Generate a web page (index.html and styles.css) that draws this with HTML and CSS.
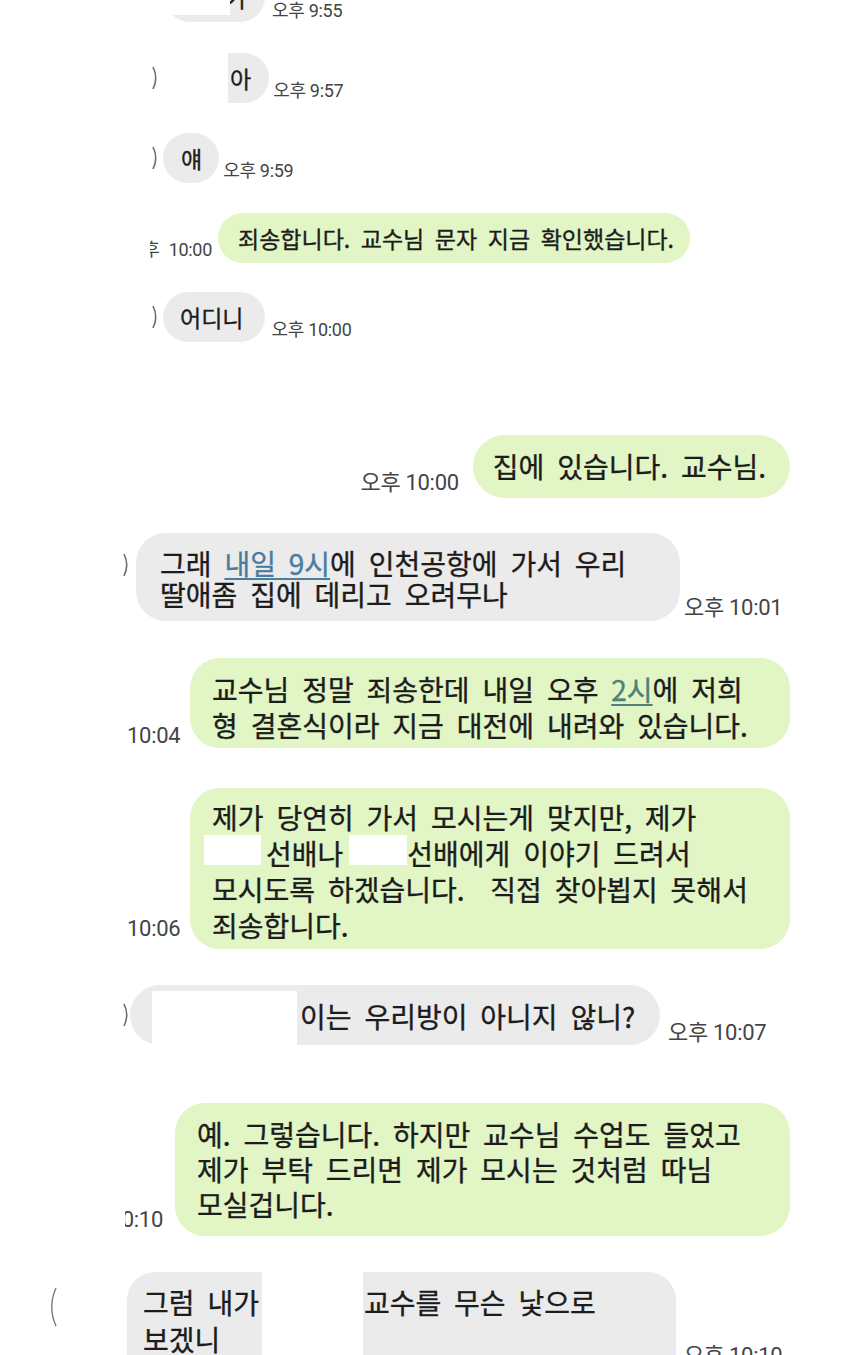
FILE: index.html
```html
<!DOCTYPE html>
<html lang="ko">
<head>
<meta charset="utf-8">
<title>chat</title>
<link rel="stylesheet" href="styles.css">
</head>
<body>
<div class="chat">

  <div class="row r1">
    <div class="bubble gray sm b1"><span class="redact rd1"></span>가</div>
    <span class="time t1">오후 9:55</span>
  </div>

  <div class="row r2">
    <svg class="mk mk2" width="6" height="24" viewBox="0 0 6 24"><path d="M1 1 Q6.5 12 1 23" fill="none" stroke="#6d6d6d" stroke-width="1.6"/></svg>
    <div class="bubble gray sm b2"><span class="redact rd2"></span>아</div>
    <span class="time t2">오후 9:57</span>
  </div>

  <div class="row r3">
    <svg class="mk mk3" width="6" height="24" viewBox="0 0 6 24"><path d="M1 1 Q6.5 12 1 23" fill="none" stroke="#6d6d6d" stroke-width="1.6"/></svg>
    <div class="bubble gray sm b3">얘</div>
    <span class="time t3">오후 9:59</span>
  </div>

  <div class="row r4">
    <span class="time clip t4"><span>오후 10:00</span></span>
    <div class="bubble green sm b4">죄송합니다. 교수님 문자 지금 확인했습니다.</div>
  </div>

  <div class="row r5">
    <svg class="mk mk3" width="6" height="24" viewBox="0 0 6 24"><path d="M1 1 Q6.5 12 1 23" fill="none" stroke="#6d6d6d" stroke-width="1.6"/></svg>
    <div class="bubble gray sm b5">어디니</div>
    <span class="time t5">오후 10:00</span>
  </div>

  <div class="row r6">
    <span class="time big t6">오후 10:00</span>
    <div class="bubble green b6">집에 있습니다. 교수님.</div>
  </div>

  <div class="row r7">
    <svg class="mk mk7" width="6" height="24" viewBox="0 0 6 24"><path d="M1 1 Q6.5 12 1 23" fill="none" stroke="#6d6d6d" stroke-width="1.6"/></svg>
    <div class="bubble gray lg b7">그래 <span class="link l1">내일 9시</span>에 인천공항에 가서 우리<br>딸애좀 집에 데리고 오려무나</div>
    <span class="time big t7">오후 10:01</span>
  </div>

  <div class="row r8">
    <span class="time big t8">10:04</span>
    <div class="bubble green lg b8">교수님 정말 죄송한데 내일 오후 <span class="link l2">2시</span>에 저희<br>형 결혼식이라 지금 대전에 내려와 있습니다.</div>
  </div>

  <div class="row r9">
    <span class="time big t9">10:06</span>
    <div class="bubble green lg b9">제가 당연히 가서 모시는게 맞지만, 제가<br><span class="hide h1"></span>선배나<span class="hide h2"></span>선배에게 이야기 드려서<br>모시도록 하겠습니다.&nbsp; 직접 찾아뵙지 못해서<br>죄송합니다.</div>
  </div>

  <div class="row r10">
    <svg class="mk mk10" width="6" height="24" viewBox="0 0 6 24"><path d="M1 1 Q6.5 12 1 23" fill="none" stroke="#6d6d6d" stroke-width="1.6"/></svg>
    <div class="bubble gray lg b10"><span class="redact rd10"></span>이는 우리방이 아니지 않니?</div>
    <span class="time big t10">오후 10:07</span>
  </div>

  <div class="row r11">
    <span class="time big clip t11"><span>10:10</span></span>
    <div class="bubble green lg b11">예. 그렇습니다. 하지만 교수님 수업도 들었고<br>제가 부탁 드리면 제가 모시는 것처럼 따님<br>모실겁니다.</div>
  </div>

  <div class="row r12">
    <svg class="mk mk12" width="10" height="40" viewBox="0 0 10 40"><path d="M9 1 Q0.5 20 9 39" fill="none" stroke="#7a7a7a" stroke-width="1.4"/></svg>
    <div class="bubble gray lg b12"><span class="redact rd12"></span>그럼 내가<span class="gap12"></span>교수를 무슨 낯으로<br>보겠니</div>
    <span class="time big t12">오후 10:10</span>
  </div>

</div>
</body>
</html>
```

FILE: styles.css
```css
html, body {
  margin: 0;
  padding: 0;
  background: #ffffff;
}
body {
  width: 850px;
  height: 1355px;
  overflow: hidden;
}
.chat {
  display: flex;
  flex-direction: column;
  font-family: "Noto Sans CJK KR", "Noto Sans", sans-serif;
  font-weight: 400;
  color: #1c1c1c;
  -webkit-text-stroke: 0.35px #1c1c1c;
}
.row {
  display: flex;
  align-items: flex-end;
}
.bubble {
  position: relative;
  box-sizing: border-box;
  border-radius: 26px;
  word-spacing: 0.18em;
  white-space: nowrap;
}
.gray { background: #ebebeb; }
.green { background: #e1f5c5; }
.sm {
  height: 50px;
  display: flex;
  align-items: center;
  font-size: 23px;
  padding: 0 20px;
}
.lg {
  font-size: 28px;
}
.time {
  font-family: Roboto, "Noto Sans CJK KR", sans-serif;
  font-weight: 400;
  font-size: 18px;
  line-height: 20px;
  color: #444444;
  -webkit-text-stroke: 0;
  white-space: nowrap;
  letter-spacing: -0.3px;
}
.time.big {
  font-size: 22px;
  line-height: 24px;
}
.clip {
  display: flex;
  justify-content: flex-end;
  overflow: hidden;
}
.clip span { flex: none; }
.mk { flex: none; align-self: center; }
.redact {
  position: absolute;
  background: #ffffff;
}
.link {
  text-decoration: underline;
  text-decoration-thickness: 1.5px;
  text-underline-offset: 3px;
}
.l1 { color: #4a7ca0; -webkit-text-stroke-color: #4a7ca0; }
.l2 { color: #4f7f78; -webkit-text-stroke-color: #4f7f78; }

/* row 1 */
.r1 { margin-top: -28px; padding-left: 165px; }
.b1 { width: 100px; padding: 0 18px 0 0; justify-content: flex-end; }
.rd1 { left: 0; top: 0; width: 65px; height: 43px; }
.t1 { margin: 0 0 1px 7px; }

/* row 2 */
.r2 { margin-top: 31px; padding-left: 152px; }
.mk2 { margin-right: 7px; }
.b2 { padding: 0 18px 0 65px; }
.rd2 { left: 0; top: 0; bottom: 0; width: 63px; }
.t2 { margin: 0 0 2px 4px; }

/* row 3 */
.r3 { margin-top: 30px; padding-left: 152px; }
.mk3 { margin-right: 5px; }
.b3 { padding: 0 17px 0 18px; }
.t3 { margin: 0 0 2px 4px; }

/* row 4 */
.r4 { margin-top: 30px; padding-left: 150px; }
.t4 { width: 62px; margin: 0 6px 3px 0; word-spacing: 5px; }
.b4 { padding: 0 16px 0 20px; }

/* row 5 */
.r5 { margin-top: 29px; padding-left: 152px; }
.b5 { padding: 0 22px 0 17px; }
.t5 { margin: 0 0 2px 6px; }

/* row 6 */
.r6 { margin-top: 93px; justify-content: flex-end; padding-right: 60px; }
.t6 { margin: 0 14px 3px 0; }
.b6 {
  font-size: 28px;
  line-height: 35px;
  padding: 14px 24px 14px 20px;
  border-radius: 32px;
}

/* row 7 */
.r7 { margin-top: 35px; padding-left: 123px; }
.mk7 { margin-right: 7px; align-self: flex-start; margin-top: 20px; }
.b7 {
  width: 544px;
  line-height: 31px;
  padding: 15px 22px 11px 24px;
  border-radius: 30px;
}
.t7 { margin: 0 0 1px 4px; }

/* row 8 */
.r8 { margin-top: 37px; padding-left: 127px; }
.t8 { width: 53px; margin: 0 10px 0 0; }
.b8 {
  width: 600px;
  line-height: 36px;
  padding: 13px 20px 5px 22px;
  border-radius: 30px;
}

/* row 9 */
.r9 { margin-top: 40px; padding-left: 127px; }
.t9 { width: 53px; margin: 0 10px 8px 0; }
.b9 {
  width: 600px;
  line-height: 36px;
  padding: 11px 20px 6px 22px;
  border-radius: 30px;
}
.hide {
  display: inline-block;
  background: #ffffff;
  height: 30px;
  vertical-align: top;
}
.h1 { width: 57px; margin-left: -8px; margin-right: 5px; }
.h2 { width: 58px; margin-left: 6px; }

/* row 10 */
.r10 { margin-top: 36px; padding-left: 123px; }
.mk10 { margin-right: 1px; }
.b10 {
  width: 530px;
  line-height: 35px;
  padding: 14px 20px 11px 170px;
  border-radius: 30px;
}
.rd10 { left: 22px; top: 6px; width: 145px; height: 57px; }
.t10 { margin: 0 0 0 8px; }

/* row 11 */
.r11 { margin-top: 58px; padding-left: 125px; }
.t11 { width: 38px; margin: 0 12px 4px 0; }
.b11 {
  width: 615px;
  line-height: 35px;
  padding: 14px 20px 14px 22px;
  border-radius: 30px;
}

/* row 12 */
.r12 { margin-top: 36px; padding-left: 47px; align-items: flex-start; }
.mk12 { margin: 15px 70px 0 0; align-self: flex-start; }
.b12 {
  width: 549px;
  height: 110px;
  line-height: 37px;
  padding: 12px 20px 0 16px;
  border-radius: 28px 28px 0 0;
}
.rd12 { left: 135px; top: 0; bottom: 0; width: 101px; }
.gap12 { display: inline-block; width: 105px; }
.t12 { margin: 72px 0 0 8px; }
```
